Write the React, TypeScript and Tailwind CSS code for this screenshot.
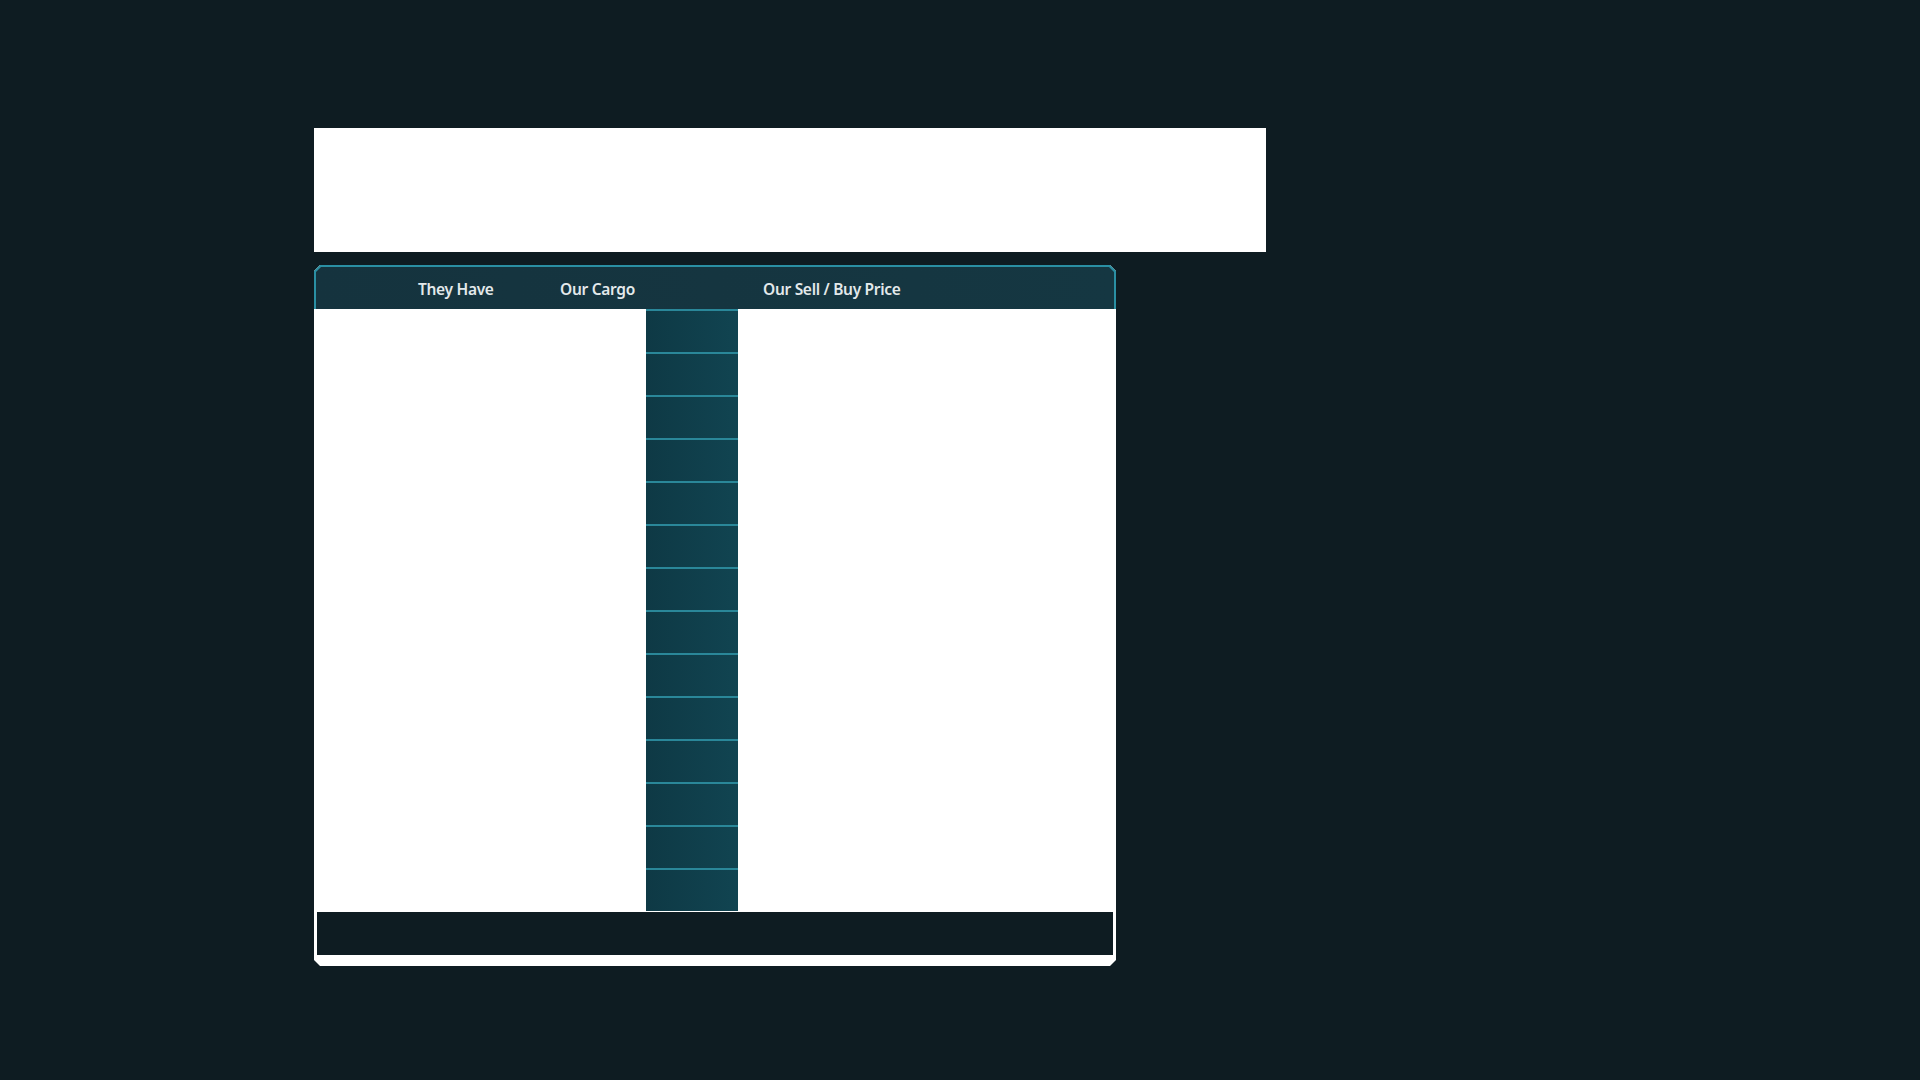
import React from "react";

const rows = Array.from({ length: 14 }, (_, i) => i);

export default function App() {
  return (
    <div className="w-full h-[1080px] bg-[#0e1c22] overflow-hidden" style={{ fontFamily: '"Noto Sans", "Open Sans", sans-serif' }}>
      <div className="pt-[128px] pl-[314px]">
        <div className="w-[952px] h-[124px] bg-white" />
        <div className="mt-[13px] w-[802px] h-[701px] bg-white flex flex-col [clip-path:polygon(6px_0,796px_0,802px_6px,802px_695px,796px_701px,6px_701px,0_695px,0_6px)]">
          <div className="h-[44px] bg-[#2a8fa3] pt-[2px] px-[2px] shrink-0">
            <div className="h-full bg-gradient-to-r from-[#15333e] to-[#153742] [clip-path:polygon(5px_0,calc(100%-5px)_0,100%_5px,100%_100%,0_100%,0_5px)] flex items-center pt-[3px] text-[15.5px] font-semibold text-[#e3e9eb] tracking-[-0.3px]">
              <div className="w-[244px] pl-[102px] shrink-0 whitespace-nowrap">They Have</div>
              <div className="w-[203px] shrink-0 whitespace-nowrap">Our Cargo</div>
              <div className="whitespace-nowrap">Our Sell / Buy Price</div>
            </div>
          </div>
          <div className="flex h-[603px] shrink-0">
            <div className="w-[332px]" />
            <div className="w-[92px] flex flex-col">
              {rows.map((i) => (
                <div
                  key={i}
                  className="h-[43px] border-t-2 border-[#2a8799] bg-gradient-to-r from-[#0e3945] to-[#114451] shrink-0"
                />
              ))}
            </div>
            <div className="flex-1" />
          </div>
          <div className="mx-[3px] h-[43px] bg-[#0e1c22] shrink-0" />
        </div>
      </div>
    </div>
  );
}
